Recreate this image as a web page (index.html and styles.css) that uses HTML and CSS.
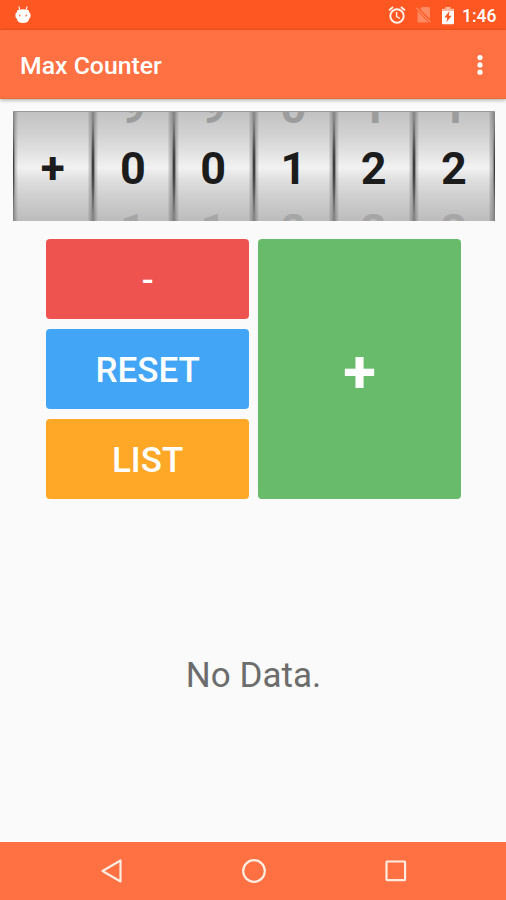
FILE: index.html
```html
<!DOCTYPE html>
<html lang="en">
<head>
<meta charset="utf-8">
<title>Max Counter</title>
<link rel="stylesheet" href="styles.css">
</head>
<body>
<div class="status">
  <svg class="droid" width="18" height="20" viewBox="0 0 18 20"><path d="M5 1.500l.6 3M13 1.500l-.6 3" stroke="#fff" stroke-width="1.200"/><path d="M3.500 5Q9 3.500 14.500 5L15.300 7.500Q17 8 16.600 11Q16.500 13 15.300 13.500Q14.500 18 9 18T2.700 13.500Q1.500 13 1.400 11Q1 8 2.700 7.500Z" fill="#fff"/><circle cx="5.700" cy="10.500" r=".9" fill="#ff7a50"/><circle cx="12.300" cy="10.500" r=".9" fill="#ff7a50"/></svg>
  <svg class="alarm" width="18" height="20" viewBox="0 0 18 20"><g fill="none" stroke="#fff3ee"><circle cx="9" cy="11" r="6.700" stroke-width="1.900"/><path d="M1 5.400L5 2M17 5.400L13 2" stroke-width="1.900"/><path d="M8.600 7v4.500l3.400 2" stroke-width="1.400"/></g></svg>
  <svg class="sim" width="15" height="18" viewBox="0 0 15 18"><path d="M6 1h6.500q1.500 0 1.500 1.500V13L4 3zM1.500 5L12.500 16.500H2.500Q1.500 16.500 1.500 15.500z" fill="#ff8a62"/><path d="M.5 2L14.500 16.300" stroke="#ff8a62" stroke-width="1.300"/><path d="M3.300 3.300L14 14.200" stroke="#ff5722" stroke-width="1"/></svg>
  <svg class="battery" width="12" height="19" viewBox="0 0 12 19"><path d="M3.500 1h5v1.700H12V6H0V2.700h3.500z" fill="#ffb59b"/><path d="M0 5h12v12.200q0 1-1 1H1q-1 0-1-1z" fill="#fff"/><path d="M7.600 5L2.300 11.500h3L4.400 16.200 9.700 9.700H6.800z" fill="#ff5722"/></svg>
  <span class="time">1:46</span>
</div>
<header class="appbar">
  <h1>Max Counter</h1>
  <svg width="6" height="22" viewBox="0 0 6 22" fill="#fff"><circle cx="3" cy="3.600" r="2.600"/><circle cx="3" cy="10.900" r="2.600"/><circle cx="3" cy="18.200" r="2.600"/></svg>
</header>
<main>
  <div class="counter">
    <div class="wheel sign"><i></i><b>+</b><i></i></div>
    <div class="wheel"><i>9</i><b>0</b><i>1</i></div>
    <div class="wheel"><i>9</i><b>0</b><i>1</i></div>
    <div class="wheel"><i>0</i><b>1</b><i>2</i></div>
    <div class="wheel"><i>1</i><b>2</b><i>3</i></div>
    <div class="wheel"><i>1</i><b>2</b><i>3</i></div>
  </div>
  <div class="pad">
    <button class="minus">-</button>
    <button class="reset">RESET</button>
    <button class="list">LIST</button>
    <button class="plus">+</button>
  </div>
  <p class="empty">No Data.</p>
</main>
<nav>
  <svg width="26" height="26" viewBox="0 0 26 26"><path d="M3.500 13L21.500 2.500V23.500z"/></svg>
  <svg width="26" height="26" viewBox="0 0 26 26"><circle cx="13" cy="13" r="10.800"/></svg>
  <svg width="26" height="26" viewBox="0 0 26 26"><rect x="3.500" y="3.500" width="18.600" height="18.600" rx=".5"/></svg>
</nav>
</body>
</html>
```
FILE: styles.css
```css
* { box-sizing: border-box; }
body {
  margin: 0;
  height: 900px;
  display: flex;
  flex-direction: column;
  background: #fafafa;
  font-family: Roboto, "Liberation Sans", sans-serif;
  overflow: hidden;
}
.status {
  height: 30px;
  display: flex;
  align-items: center;
  padding: 0 10px 0 14px;
  background: #ff5722;
  color: #fff;
}
.droid { margin: -1px auto 0 0; }
.alarm { margin-right: 10px; }
.sim { margin-right: 11px; }
.battery { margin-right: 8px; }
.time {
  width: 34px;
  font-size: 17.5px;
  font-weight: 500;
  line-height: 30px;
  padding-top: 2px;
  white-space: nowrap;
}
.appbar {
  height: 69px;
  display: flex;
  align-items: center;
  justify-content: space-between;
  padding: 2px 23px 0 20px;
  background: #ff7043;
  border-bottom: 1px solid #e96b38;
  box-shadow: 0 1px 4px rgba(0, 0, 0, .35);
  color: #fff;
}
h1 {
  margin: 0;
  font-size: 24.8px;
  font-weight: 500;
}
main {
  flex: 1;
  padding: 12px 12px 0 13px;
}
.counter {
  display: grid;
  grid-template-columns: repeat(6, 1fr);
  width: 481.5px;
  height: 109.5px;
  border-top: 1px solid #999;
}
.wheel {
  display: flex;
  flex-direction: column;
  align-items: center;
  justify-content: center;
  overflow: hidden;
  padding: 4px 1px 0 0;
  background:
    radial-gradient(ellipse 2px 50px at 0 50%, rgba(0, 0, 0, .8), rgba(0, 0, 0, .4) 50%, transparent),
    radial-gradient(ellipse 2px 50px at 100% 50%, rgba(0, 0, 0, .8), rgba(0, 0, 0, .4) 50%, transparent),
    linear-gradient(90deg, rgba(70, 70, 70, .55), rgba(90, 90, 90, .35) 2px, rgba(120, 120, 120, .25) 3.5px, transparent 5px, transparent 75px, rgba(120, 120, 120, .3) 76px, rgba(90, 90, 90, .35) 78px, rgba(70, 70, 70, .55)),
    linear-gradient(#c2c2c2, #d3d3d3 22%, #e5e5e5 40%, #f2f2f2 51%, #dedede 63%, #cdcdcd 80%, #bcbcbc);
  font-size: 45px;
  line-height: 61px;
}
.wheel i, .wheel b {
  flex: none;
  height: 61px;
  font-style: normal;
  font-weight: 700;
}
.wheel i { color: #9c9c9c; }
.wheel i:last-child { padding-top: 1px; color: #a6a6a6; }
.wheel b { color: #1c1c1c; }
.sign b { font-size: 44px; }
.pad {
  display: grid;
  grid-template-columns: 202.5px 202.5px;
  grid-template-rows: repeat(3, 80.5px);
  gap: 9.5px;
  margin: 18px 0 0 33.4px;
}
button {
  border: 0;
  border-radius: 4px;
  padding: 4px 0 0;
  color: #fff;
  font: 500 35px Roboto, "Liberation Sans", sans-serif;
}
.minus { background: #ef5350; }
.reset { background: #42a5f5; }
.list { background: #ffa726; }
.plus {
  grid-column: 2;
  grid-row: 1 / 4;
  padding-top: 5px;
  background: #68bb6b;
  font-size: 60px;
  font-weight: 700;
}
.empty {
  margin: 155.5px 0 0;
  text-align: center;
  font-size: 35px;
  line-height: 42px;
  color: #6c6c6c;
}
nav {
  height: 58px;
  display: flex;
  justify-content: center;
  align-items: center;
  gap: 116px;
  padding-left: 1px;
  background: #ff7043;
}
nav svg {
  fill: none;
  stroke: #ffece0;
  stroke-width: 2.2;
  stroke-linejoin: round;
}
```
